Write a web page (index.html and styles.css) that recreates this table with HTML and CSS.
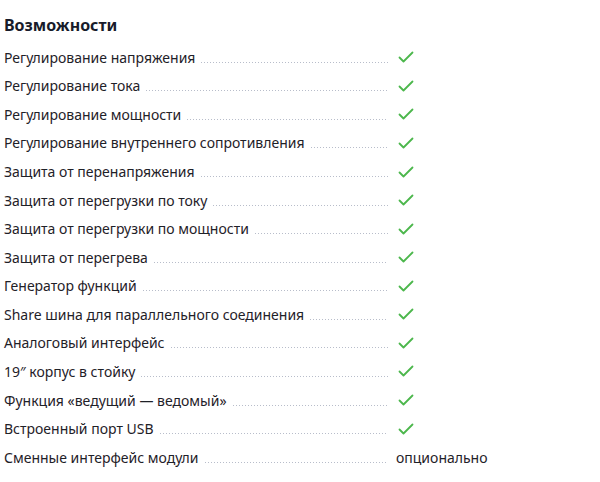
FILE: index.html
```html
<!DOCTYPE html>
<html lang="ru">
<head>
<meta charset="utf-8">
<link rel="stylesheet" href="styles.css">
</head>
<body>
<section class="features">
  <h2 class="title">Возможности</h2>
  <ul class="list">
    <li class="row"><span class="label"><span class="text">Регулирование напряжения</span><span class="leader"></span></span><span class="value"><svg class="check" viewBox="0 0 16 12"><path d="M1.5 6.5 L5.5 10.5 L14.5 1.5"/></svg></span></li>
    <li class="row"><span class="label"><span class="text">Регулирование тока</span><span class="leader"></span></span><span class="value"><svg class="check" viewBox="0 0 16 12"><path d="M1.5 6.5 L5.5 10.5 L14.5 1.5"/></svg></span></li>
    <li class="row"><span class="label"><span class="text">Регулирование мощности</span><span class="leader"></span></span><span class="value"><svg class="check" viewBox="0 0 16 12"><path d="M1.5 6.5 L5.5 10.5 L14.5 1.5"/></svg></span></li>
    <li class="row"><span class="label"><span class="text">Регулирование внутреннего сопротивления</span><span class="leader"></span></span><span class="value"><svg class="check" viewBox="0 0 16 12"><path d="M1.5 6.5 L5.5 10.5 L14.5 1.5"/></svg></span></li>
    <li class="row"><span class="label"><span class="text">Защита от перенапряжения</span><span class="leader"></span></span><span class="value"><svg class="check" viewBox="0 0 16 12"><path d="M1.5 6.5 L5.5 10.5 L14.5 1.5"/></svg></span></li>
    <li class="row"><span class="label"><span class="text">Защита от перегрузки по току</span><span class="leader"></span></span><span class="value"><svg class="check" viewBox="0 0 16 12"><path d="M1.5 6.5 L5.5 10.5 L14.5 1.5"/></svg></span></li>
    <li class="row"><span class="label"><span class="text">Защита от перегрузки по мощности</span><span class="leader"></span></span><span class="value"><svg class="check" viewBox="0 0 16 12"><path d="M1.5 6.5 L5.5 10.5 L14.5 1.5"/></svg></span></li>
    <li class="row"><span class="label"><span class="text">Защита от перегрева</span><span class="leader"></span></span><span class="value"><svg class="check" viewBox="0 0 16 12"><path d="M1.5 6.5 L5.5 10.5 L14.5 1.5"/></svg></span></li>
    <li class="row"><span class="label"><span class="text">Генератор функций</span><span class="leader"></span></span><span class="value"><svg class="check" viewBox="0 0 16 12"><path d="M1.5 6.5 L5.5 10.5 L14.5 1.5"/></svg></span></li>
    <li class="row"><span class="label"><span class="text">Share шина для параллельного соединения</span><span class="leader"></span></span><span class="value"><svg class="check" viewBox="0 0 16 12"><path d="M1.5 6.5 L5.5 10.5 L14.5 1.5"/></svg></span></li>
    <li class="row"><span class="label"><span class="text">Аналоговый интерфейс</span><span class="leader"></span></span><span class="value"><svg class="check" viewBox="0 0 16 12"><path d="M1.5 6.5 L5.5 10.5 L14.5 1.5"/></svg></span></li>
    <li class="row"><span class="label"><span class="text">19″ корпус в стойку</span><span class="leader"></span></span><span class="value"><svg class="check" viewBox="0 0 16 12"><path d="M1.5 6.5 L5.5 10.5 L14.5 1.5"/></svg></span></li>
    <li class="row"><span class="label"><span class="text">Функция «ведущий — ведомый»</span><span class="leader"></span></span><span class="value"><svg class="check" viewBox="0 0 16 12"><path d="M1.5 6.5 L5.5 10.5 L14.5 1.5"/></svg></span></li>
    <li class="row"><span class="label"><span class="text">Встроенный порт USB</span><span class="leader"></span></span><span class="value"><svg class="check" viewBox="0 0 16 12"><path d="M1.5 6.5 L5.5 10.5 L14.5 1.5"/></svg></span></li>
    <li class="row"><span class="label"><span class="text">Сменные интерфейс модули</span><span class="leader"></span></span><span class="value">опционально</span></li>
  </ul>
</section>
</body>
</html>
```

FILE: styles.css
```css
html, body {
  margin: 0;
  padding: 0;
  background: #ffffff;
}
body {
  font-family: "Noto Sans", "Open Sans", sans-serif;
  color: #1f2128;
}
.features {
  width: 484px;
  padding: 13px 0 0 4px;
}
.title {
  margin: 0 0 6px 0;
  font-size: 16px;
  line-height: 24px;
  font-weight: 700;
  color: #181b2a;
}
.list {
  list-style: none;
  margin: 0;
  padding: 0;
}
.row {
  display: flex;
  align-items: center;
  height: 28.57px;
  font-size: 14px;
}
.label {
  flex: 1;
  display: flex;
  align-items: baseline;
  min-width: 0;
}
.text {
  white-space: nowrap;
}
.leader {
  flex: 1;
  height: 1px;
  margin: 0 0 0 6px;
  background-image: linear-gradient(to right, #b8bdca 1px, transparent 1px);
  background-size: 3px 1px;
  background-repeat: repeat-x;
}
.value {
  width: 92px;
  padding-left: 8px;
  display: flex;
  align-items: center;
  white-space: nowrap;
}
.check {
  width: 16px;
  height: 12px;
  margin-left: 2px;
  fill: none;
  stroke: #4cb74c;
  stroke-width: 1.8;
  stroke-linecap: round;
  stroke-linejoin: round;
}
```
